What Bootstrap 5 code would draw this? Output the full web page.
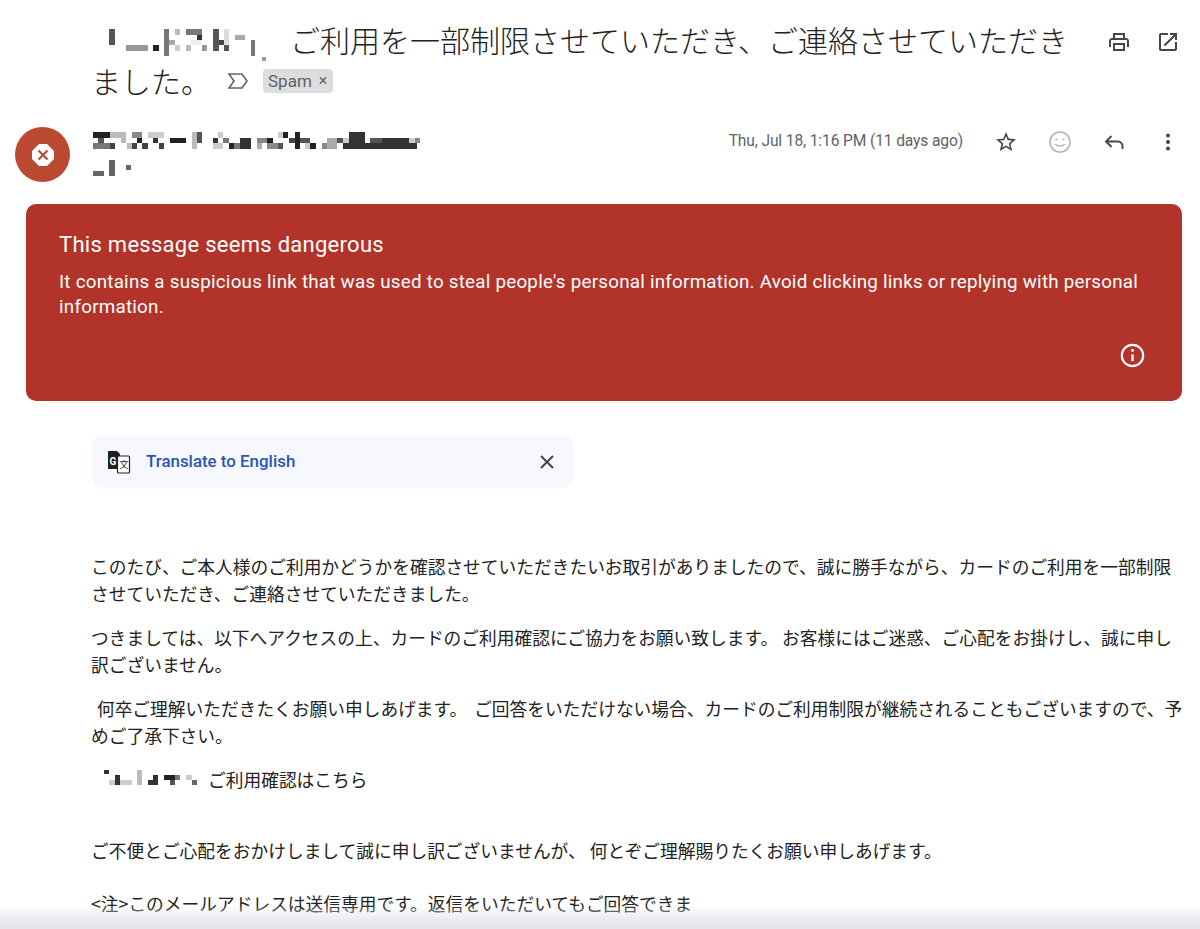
<!DOCTYPE html>
<html lang="ja">
<head>
<meta charset="UTF-8">
<meta name="viewport" content="width=device-width, initial-scale=1.0">
<title>Spam message</title>
<link href="https://cdn.jsdelivr.net/npm/bootstrap@5.3.0/dist/css/bootstrap.min.css" rel="stylesheet">
<script src="https://cdn.jsdelivr.net/npm/bootstrap@5.3.0/dist/js/bootstrap.bundle.min.js"></script>
<style>
html, body { height: 929px; overflow: hidden; }
body { background: #fff; color: #222; font-family: Roboto, "Noto Sans CJK JP", sans-serif; }
.subject-row { padding: 21px 20px 0 91px; }
.subject-text { width: 999px; font-size: 30px; font-weight: 300; color: #222; font-family: "Noto Sans CJK JP", sans-serif; }
.subject-line { height: 40px; line-height: 40px; white-space: nowrap; }
.subject-words { margin-top: -2px; }
.mosaic-sub { width: 199px; height: 40px; flex: none; }
.label-arrow { width: 24px; height: 24px; margin: 0 13px 0 15px; flex: none; }
.spam-tag { background: #dddddd; color: #5f6368; font: 400 17px/24px Roboto, sans-serif; padding: 0 6px 0 5px; border-radius: 4px; gap: 7px; }
.spam-x { font-size: 16px; }
.top-icons { gap: 25px; margin-left: 17px; padding-top: 9px; }
.ico { width: 24px; height: 24px; fill: #444746; flex: none; }
.ico-line { fill: none; }
.sender-row { padding: 26px 20px 0 15px; }
.avatar { width: 55px; height: 55px; background: #bc4a33; flex: none; }
.mosaic-name { width: 340px; height: 55px; margin-left: 22px; flex: none; }
.date-text { font-size: 15.6px; line-height: 24px; letter-spacing: -.13px; color: #5f6368; margin: 2px 31px 0 0; }
.msg-icons { gap: 30px; padding-top: 3px; }
.danger-box { margin: 22px 18px 0 26px; height: 197px; background: #b23329; color: #fff; border-radius: 10px; padding: 28px 33px 0 33px; }
.danger-title { font-size: 22px; letter-spacing: .28px; line-height: 26px; margin-bottom: 12px; }
.danger-body { font-size: 18.8px; letter-spacing: .24px; line-height: 25px; }
.info-ico { width: 27px; height: 27px; margin: 22px 3px 0 0; }
.translate-bar { margin: 34px 0 0 92px; width: 482px; height: 53px; background: #f6f8fd; border-radius: 12px; padding: 0 20px 0 15px; }
.translate-link { font-size: 16.9px; font-weight: 500; color: #2a56b0; margin-left: 15px; text-decoration: none; }
.mail-body { margin: 65px 16px 0 91px; font-family: "Noto Sans CJK JP", sans-serif; font-size: 17.73px; line-height: 27px; color: #222; }
.mail-body p { margin: 0 0 17px; }
.mosaic-link { width: 117px; height: 27px; vertical-align: top; }
.mail-body .closing-line { margin: 44px 0 26px; }
.bottom-fade { position: fixed; left: 0; right: 0; bottom: 0; height: 24px; background: linear-gradient(to bottom, rgba(228,230,234,0), #e4e6ea 80%); }
</style>
</head>
<body>
<!-- subject -->
<div class="subject-row d-flex align-items-start">
  <div class="subject-text">
    <div class="subject-line d-flex">
      <svg class="mosaic-sub" viewBox="91 21 199 40"><rect x="109" y="29" width="6" height="16" fill="#555"/><rect x="126" y="45" width="22" height="6" fill="#999"/><rect x="153" y="45" width="6" height="6" fill="#222"/><rect x="164" y="29" width="5" height="27" fill="#777"/><rect x="169" y="40" width="6" height="5" fill="#aaa"/><rect x="175" y="29" width="5" height="6" fill="#bbb"/><rect x="175" y="45" width="5" height="6" fill="#ccc"/><rect x="186" y="45" width="5" height="6" fill="#bbb"/><rect x="186" y="29" width="16" height="6" fill="#777"/><rect x="197" y="35" width="5" height="5" fill="#333"/><rect x="191" y="40" width="11" height="5" fill="#eee"/><rect x="202" y="45" width="5" height="6" fill="#999"/><rect x="213" y="29" width="6" height="22" fill="#555"/><rect x="219" y="40" width="5" height="5" fill="#444"/><rect x="224" y="29" width="5" height="16" fill="#ddd"/><rect x="224" y="45" width="5" height="6" fill="#555"/><rect x="235" y="35" width="10" height="5" fill="#aaa"/><rect x="251" y="40" width="4" height="16" fill="#777"/><rect x="262" y="57" width="4" height="5" fill="#999"/></svg>
      <span class="subject-words">ご利用を一部制限させていただき、ご連絡させていただき</span>
    </div>
    <div class="subject-line d-flex align-items-center">
      <span class="subject-words">ました。</span>
      <svg class="label-arrow" viewBox="0 0 24 24" fill="none" stroke="#5f6368" stroke-width="1.6"><path d="M3 5h13l5 7-5 7H3l5-7z"/></svg>
      <div class="spam-tag d-flex"><span>Spam</span><span class="spam-x">×</span></div>
    </div>
  </div>
  <div class="top-icons d-flex">
    <svg class="ico" viewBox="0 0 24 24"><path d="M19 8h-1V3H6v5H5c-1.66 0-3 1.34-3 3v6h4v4h12v-4h4v-6c0-1.66-1.34-3-3-3zM8 5h8v3H8V5zm8 14H8v-4h8v4zm2-2v-4H6v4H4v-6c0-.55.45-1 1-1h14c.55 0 1 .45 1 1v6h-2z"/></svg>
    <svg class="ico" viewBox="0 0 24 24"><path d="M19 19H5V5h7V3H5c-1.11 0-2 .9-2 2v14c0 1.1.89 2 2 2h14c1.1 0 2-.9 2-2v-7h-2v7zM14 3v2h3.59l-9.83 9.83 1.41 1.41L19 6.41V10h2V3h-7z"/></svg>
  </div>
</div>

<!-- sender line -->
<div class="sender-row d-flex align-items-start">
  <div class="avatar rounded-circle d-flex align-items-center justify-content-center">
    <svg width="24" height="24" viewBox="0 0 24 24"><path d="M8 1h8l7 7v8l-7 7H8l-7-7V8z" fill="#fff"/><path d="M7.500 7.500l9 9M16.500 7.500l-9 9" stroke="#bc4a33" stroke-width="2.200"/></svg>
  </div>
  <svg class="mosaic-name" viewBox="92 127 340 55"><rect x="93" y="132" width="17" height="6" fill="#222"/><rect x="98" y="138" width="6" height="5" fill="#555"/><rect x="93" y="143" width="17" height="6" fill="#777"/><rect x="110" y="143" width="5" height="6" fill="#444"/><rect x="110" y="132" width="11" height="6" fill="#bbb"/><rect x="121" y="132" width="5" height="11" fill="#bbb"/><rect x="132" y="132" width="10" height="6" fill="#888"/><rect x="137" y="138" width="5" height="5" fill="#222"/><rect x="127" y="143" width="5" height="6" fill="#bbb"/><rect x="132" y="143" width="5" height="6" fill="#444"/><rect x="142" y="143" width="6" height="6" fill="#444"/><rect x="148" y="132" width="16" height="6" fill="#ccc"/><rect x="153" y="138" width="5" height="5" fill="#333"/><rect x="159" y="143" width="5" height="6" fill="#444"/><rect x="170" y="138" width="16" height="5" fill="#222"/><rect x="192" y="132" width="5" height="17" fill="#bbb"/><rect x="197" y="132" width="5" height="11" fill="#555"/><rect x="218" y="132" width="5" height="6" fill="#ccc"/><rect x="213" y="138" width="5" height="5" fill="#333"/><rect x="223" y="138" width="6" height="5" fill="#777"/><rect x="213" y="143" width="10" height="6" fill="#ccc"/><rect x="229" y="143" width="5" height="6" fill="#222"/><rect x="234" y="143" width="6" height="6" fill="#777"/><rect x="240" y="138" width="11" height="11" fill="#333"/><rect x="257" y="138" width="10" height="5" fill="#888"/><rect x="267" y="138" width="6" height="5" fill="#222"/><rect x="257" y="143" width="5" height="6" fill="#aaa"/><rect x="267" y="143" width="11" height="6" fill="#888"/><rect x="278" y="143" width="5" height="6" fill="#555"/><rect x="278" y="132" width="5" height="6" fill="#ccc"/><rect x="283" y="132" width="5" height="6" fill="#222"/><rect x="289" y="138" width="6" height="5" fill="#444"/><rect x="295" y="132" width="5" height="17" fill="#222"/><rect x="300" y="138" width="10" height="5" fill="#555"/><rect x="305" y="143" width="5" height="6" fill="#ccc"/><rect x="310" y="143" width="6" height="6" fill="#222"/><rect x="322" y="143" width="5" height="6" fill="#888"/><rect x="327" y="138" width="10" height="11" fill="#aaa"/><rect x="337" y="138" width="6" height="5" fill="#555"/><rect x="343" y="143" width="74" height="6" fill="#333"/><rect x="349" y="132" width="16" height="11" fill="#333"/><rect x="343" y="138" width="6" height="5" fill="#ccc"/><rect x="370" y="138" width="12" height="5" fill="#555"/><rect x="382" y="138" width="27" height="5" fill="#333"/><rect x="409" y="138" width="6" height="5" fill="#ccc"/><rect x="415" y="138" width="5" height="5" fill="#888"/><rect x="93" y="171" width="11" height="5" fill="#666"/><rect x="109" y="160" width="6" height="16" fill="#666"/><rect x="126" y="165" width="5" height="5" fill="#666"/></svg>
  <div class="date-text ms-auto">Thu, Jul 18, 1:16 PM (11 days ago)</div>
  <div class="msg-icons d-flex">
    <svg class="ico" viewBox="0 0 24 24"><path d="M22 9.240l-7.190-.620L12 2 9.190 8.630 2 9.240l5.460 4.730L5.820 21 12 17.270 18.180 21l-1.630-7.030L22 9.240zM12 15.400l-3.760 2.270 1-4.280-3.320-2.880 4.380-.380L12 6.100l1.710 4.040 4.380.380-3.320 2.880 1 4.280L12 15.400z"/></svg>
    <svg class="ico ico-line" viewBox="0 0 24 24" stroke="#b5b5b5" stroke-width="1.600"><circle cx="12" cy="12" r="10"/><circle cx="8.500" cy="9.500" r="1.100" fill="#b5b5b5" stroke="none"/><circle cx="15.500" cy="9.500" r="1.100" fill="#b5b5b5" stroke="none"/><path d="M7.500 14.500c2.500 2 6.500 2 9 0" stroke-linecap="round"/></svg>
    <svg class="ico ico-line" viewBox="0 0 24 24" stroke="#444746" stroke-width="1.900"><path d="M9.500 6 4 11.500 9.500 17M4 11.500h12a4.500 4.500 0 0 1 4.500 4.500v3"/></svg>
    <svg class="ico" viewBox="0 0 24 24"><circle cx="12" cy="5.500" r="2"/><circle cx="12" cy="12" r="2"/><circle cx="12" cy="18.500" r="2"/></svg>
  </div>
</div>

<!-- warning banner -->
<div class="danger-box d-flex flex-column">
  <div class="danger-title">This message seems dangerous</div>
  <div class="danger-body">It contains a suspicious link that was used to steal people's personal information. Avoid clicking links or replying with personal information.</div>
  <svg class="info-ico align-self-end" viewBox="0 0 24 24" fill="none" stroke="#fff" stroke-width="1.900"><circle cx="12" cy="12" r="9.500"/><path d="M12 11v6" stroke-width="2.200"/><circle cx="12" cy="7.500" r="1.300" fill="#fff" stroke="none"/></svg>
</div>

<!-- translate -->
<div class="translate-bar d-flex align-items-center">
  <svg width="24" height="24" viewBox="0 0 24 24"><path d="M1 1h9l3 3v15H1z" fill="#202124"/><rect x="10.500" y="6" width="12" height="17" rx="1" fill="#fff" stroke="#202124" stroke-width="1.200"/><text x="2.500" y="15" font-family="Roboto, sans-serif" font-size="10" font-weight="700" fill="#fff">G</text><text x="12.500" y="18" font-family="Noto Sans CJK JP, sans-serif" font-size="9" fill="#202124">文</text></svg>
  <a class="translate-link" href="#">Translate to English</a>
  <svg class="ms-auto" width="14" height="14" viewBox="0 0 14 14" stroke="#444746" stroke-width="2"><path d="M1 1l12 12M13 1L1 13"/></svg>
</div>

<!-- message text -->
<div class="mail-body">
  <p>このたび、ご本人様のご利用かどうかを確認させていただきたいお取引がありましたので、誠に勝手ながら、カードのご利用を一部制限させていただき、ご連絡させていただきました。</p>
  <p>つきましては、以下へアクセスの上、カードのご利用確認にご協力をお願い致します。 お客様にはご迷惑、ご心配をお掛けし、誠に申し訳ございません。</p>
  <p>&#8196;何卒ご理解いただきたくお願い申しあげます。&#8198; ご回答をいただけない場合、カードのご利用制限が継続されることもございますので、予めご了承下さい。</p>
  <p><svg class="mosaic-link" viewBox="91 766 117 27"><rect x="104" y="770" width="5" height="4" fill="#333"/><rect x="109" y="780" width="6" height="5" fill="#ccc"/><rect x="115" y="775" width="5" height="10" fill="#333"/><rect x="120" y="780" width="12" height="5" fill="#ccc"/><rect x="137" y="770" width="5" height="15" fill="#bbb"/><rect x="148" y="780" width="10" height="5" fill="#333"/><rect x="153" y="775" width="5" height="5" fill="#333"/><rect x="164" y="775" width="11" height="5" fill="#222"/><rect x="170" y="780" width="5" height="5" fill="#555"/><rect x="175" y="775" width="5" height="5" fill="#777"/><rect x="186" y="775" width="6" height="5" fill="#ccc"/><rect x="192" y="780" width="5" height="5" fill="#666"/></svg>ご利用確認はこちら</p>
  <p class="closing-line">ご不便とご心配をおかけしまして誠に申し訳ございませんが、 何とぞご理解賜りたくお願い申しあげます。</p>
  <p>&lt;注&gt;このメールアドレスは送信専用です。返信をいただいてもご回答できま</p>
</div>
<div class="bottom-fade"></div>
</body>
</html>
